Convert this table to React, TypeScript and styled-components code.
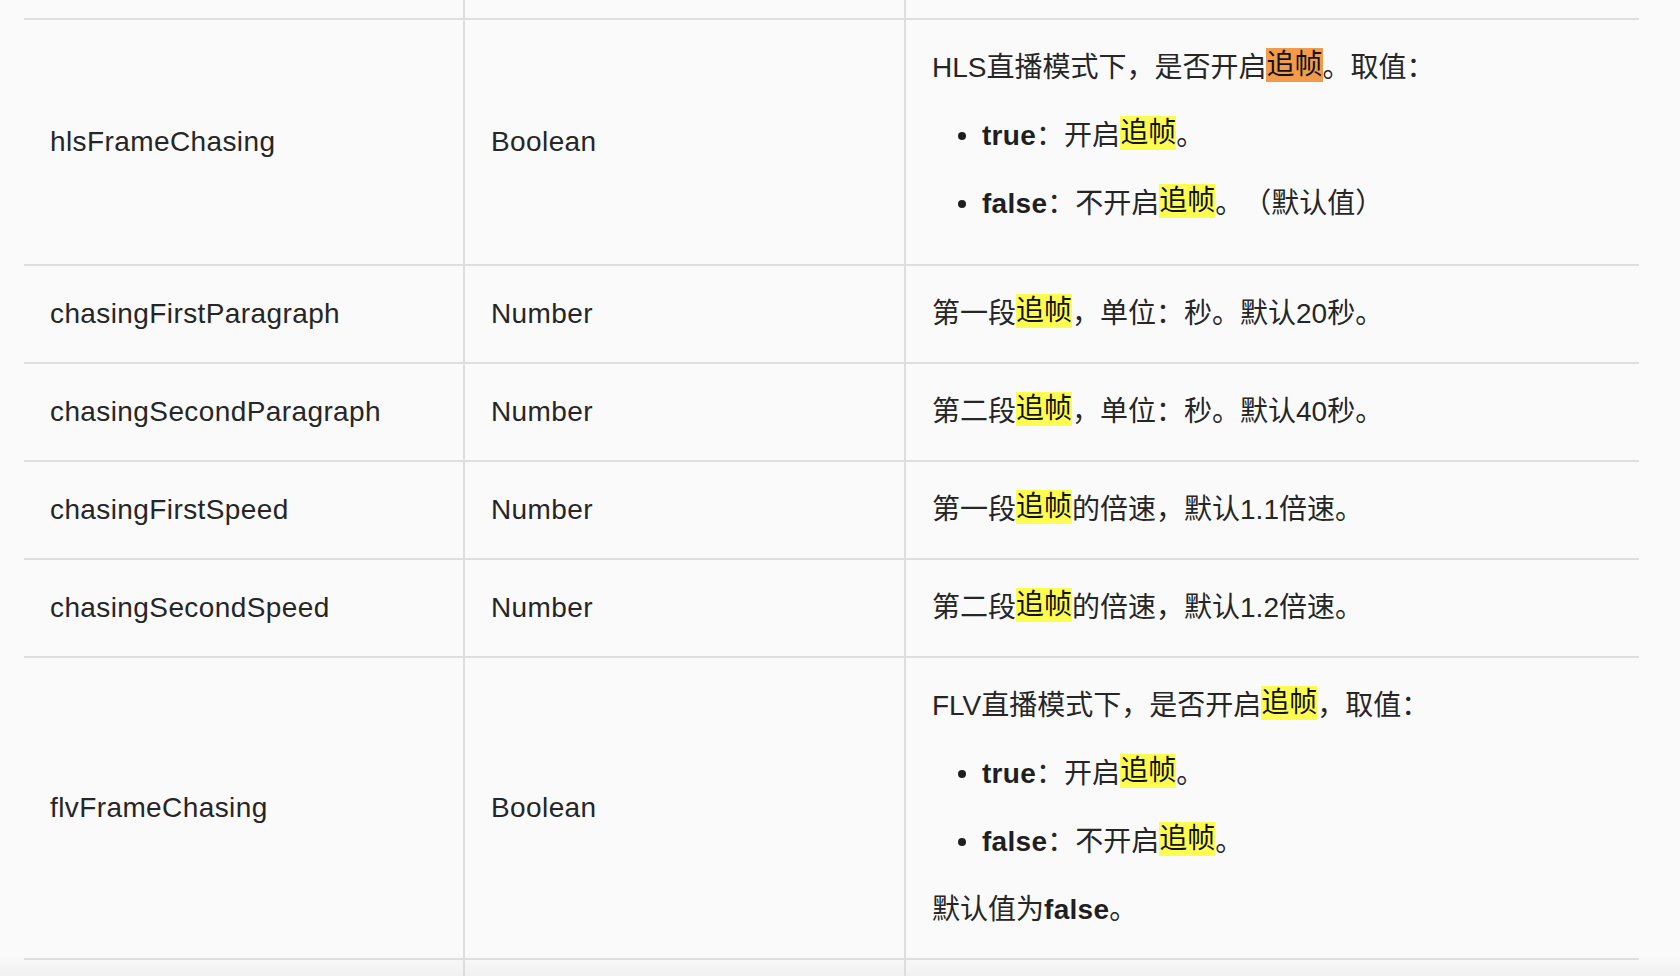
import React from "react";
import styled, { createGlobalStyle } from "styled-components";

const GlobalStyle = createGlobalStyle`
  html, body {
    margin: 0;
    padding: 0;
    background: #fafafa;
  }
  body {
    font-family: "Liberation Sans", "Noto Sans CJK SC", sans-serif;
    color: #262626;
    text-spacing-trim: space-all;
  }
`;

const Page = styled.div`
  height: 976px;
  overflow: hidden;
  padding-left: 24px;
  background: linear-gradient(to bottom, #fafafa 0, #fafafa 955px, #f1f1f1 976px);
`;

const Table = styled.table`
  width: 1615px;
  table-layout: fixed;
  border-collapse: separate;
  border-spacing: 0;
  font-size: 28px;
  line-height: 40px;
`;

const Cell = styled.td<{ $last?: boolean; $open?: boolean; $latin?: boolean }>`
  padding: 28px 26px;
  vertical-align: middle;
  letter-spacing: ${(p) => (p.$latin ? "0.4px" : "normal")};
  border-bottom: ${(p) => (p.$open ? "none" : "2px solid #dedede")};
  border-right: ${(p) => (p.$last ? "none" : "2px solid #dedede")};
`;

const FillerCell = styled(Cell)`
  padding: 0;
`;

const Filler = styled.div<{ $h: number }>`
  height: ${(p) => p.$h}px;
`;

const Para = styled.p`
  margin: 0;
  & + ul {
    margin-top: 28px;
  }
`;

const List = styled.ul`
  list-style: none;
  margin: 28px 0 12px;
  padding: 0;
  & + p {
    margin-top: 28px;
  }
`;

const Item = styled.li`
  display: flex;
  align-items: center;
  & + & {
    margin-top: 28px;
  }
  &::before {
    content: "";
    flex: none;
    width: 8px;
    height: 8px;
    border-radius: 50%;
    background: #1f1f1f;
    margin: 0 16px 0 26px;
  }
`;

const Strong = styled.b`
  font-weight: 700;
  color: #1f1f1f;
  letter-spacing: 0.3px;
`;

const Mark = styled.span<{ $current?: boolean }>`
  display: inline-block;
  line-height: 34px;
  vertical-align: 3px;
  background: ${(p) => (p.$current ? "#f29b4b" : "#fdfc50")};
  color: #111;
`;

const Hit = () => <Mark>追帧</Mark>;

interface Row {
  name: string;
  type: string;
  desc: React.ReactNode;
}

const rows: Row[] = [
  {
    name: "hlsFrameChasing",
    type: "Boolean",
    desc: (
      <>
        <Para>
          HLS直播模式下，是否开启<Mark $current>追帧</Mark>。取值：
        </Para>
        <List>
          <Item>
            <span>
              <Strong>true</Strong>：开启<Hit />。
            </span>
          </Item>
          <Item>
            <span>
              <Strong>false</Strong>：不开启<Hit />。（默认值）
            </span>
          </Item>
        </List>
      </>
    ),
  },
  {
    name: "chasingFirstParagraph",
    type: "Number",
    desc: (
      <Para>
        第一段<Hit />，单位：秒。默认20秒。
      </Para>
    ),
  },
  {
    name: "chasingSecondParagraph",
    type: "Number",
    desc: (
      <Para>
        第二段<Hit />，单位：秒。默认40秒。
      </Para>
    ),
  },
  {
    name: "chasingFirstSpeed",
    type: "Number",
    desc: (
      <Para>
        第一段<Hit />的倍速，默认1.1倍速。
      </Para>
    ),
  },
  {
    name: "chasingSecondSpeed",
    type: "Number",
    desc: (
      <Para>
        第二段<Hit />的倍速，默认1.2倍速。
      </Para>
    ),
  },
  {
    name: "flvFrameChasing",
    type: "Boolean",
    desc: (
      <>
        <Para>
          FLV直播模式下，是否开启<Hit />，取值：
        </Para>
        <List>
          <Item>
            <span>
              <Strong>true</Strong>：开启<Hit />。
            </span>
          </Item>
          <Item>
            <span>
              <Strong>false</Strong>：不开启<Hit />。
            </span>
          </Item>
        </List>
        <Para>
          默认值为<Strong>false</Strong>。
        </Para>
      </>
    ),
  },
];

const FillerRow = ({ h, open }: { h: number; open?: boolean }) => (
  <tr>
    <FillerCell $open={open}>
      <Filler $h={h} />
    </FillerCell>
    <FillerCell $open={open}>
      <Filler $h={h} />
    </FillerCell>
    <FillerCell $open={open} $last>
      <Filler $h={h} />
    </FillerCell>
  </tr>
);

export default function App() {
  return (
    <>
      <GlobalStyle />
      <Page>
        <Table>
          <colgroup>
            <col style={{ width: 441 }} />
            <col style={{ width: 441 }} />
            <col style={{ width: 733 }} />
          </colgroup>
          <tbody>
            <FillerRow h={18} />
            {rows.map((r) => (
              <tr key={r.name}>
                <Cell $latin>{r.name}</Cell>
                <Cell $latin>{r.type}</Cell>
                <Cell $last>{r.desc}</Cell>
              </tr>
            ))}
            <FillerRow h={40} open />
          </tbody>
        </Table>
      </Page>
    </>
  );
}
